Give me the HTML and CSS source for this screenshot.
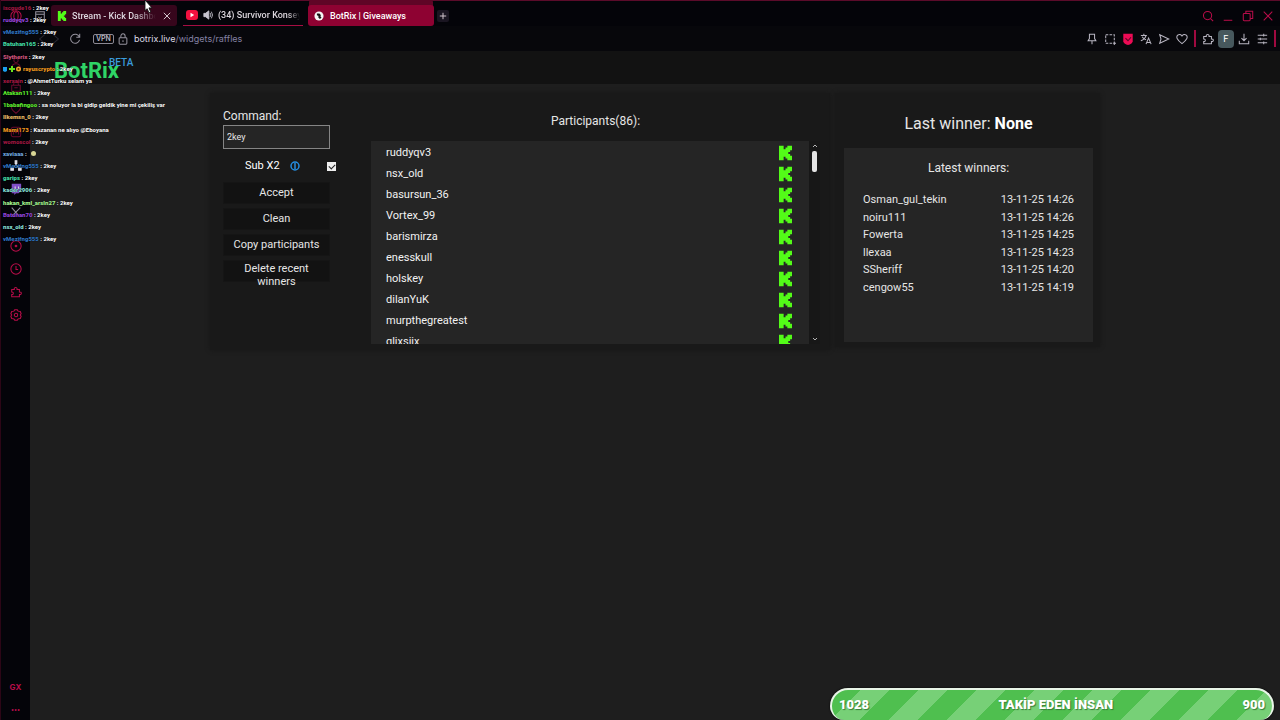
FILE: index.html
```html
<!DOCTYPE html>
<html lang="en">
<head>
<meta charset="utf-8">
<title>BotRix | Giveaways</title>
<link rel="stylesheet" href="styles.css">
</head>
<body>
<svg class="defs" aria-hidden="true">
  <symbol id="kick" viewBox="0 0 14 16"><path fill="#53fc18" d="M0 0h5v4h2V2h2V0h5v5h-2v2h-2v2h2v2h2v5H9v-2H7v-2H5v4H0z"/></symbol>
  <symbol id="puzzle" viewBox="0 0 14 14"><path d="M2 4h3c-.8-3 4-3 3.200 0H11v3c3-.6 3 3.600 0 3v2.500H2V10c2.500.4 2.500-3.400 0-3z"/></symbol>
</svg>
<div class="browser">
  <header class="tabs">
    <div class="tabs-lead">
      <svg class="ico red" viewBox="0 0 14 14"><circle cx="7" cy="7" r="6"/><ellipse cx="7" cy="7" rx="2.500" ry="5"/></svg>
      <svg class="ico grey" viewBox="0 0 14 14"><path d="M2 2h10v10H2zM2 5h10M5 8l2 2 2-2"/></svg>
    </div>
    <div class="tab tab-dim">
      <svg class="fav" viewBox="0 0 14 16"><use href="#kick"/></svg>
      <span class="tab-text fade-dim">Stream - Kick Dashboard</span>
      <button class="bare" aria-label="Close tab"><svg class="tiny" viewBox="0 0 10 10"><path d="M1 1l8 8M9 1L1 9"/></svg></button>
    </div>
    <div class="tab tab-line">
      <svg class="yt" viewBox="0 0 12 10"><rect width="12" height="10" rx="3" fill="#f2103f"/><path d="M4.500 2.800v4.400L8.200 5z" fill="#fff"/></svg>
      <svg class="fav sound" viewBox="0 0 12 12"><path fill="#c8c5d0" d="M1 4h2l4-3v10L3 8H1z"/><path d="M8.500 3.500q2 2.500 0 5M10 2q3 4 0 8"/></svg>
      <span class="tab-text fade-dark">(34) Survivor Konseyi</span>
    </div>
    <div class="tab tab-active">
      <svg class="fav" viewBox="0 0 12 12"><circle cx="6" cy="6" r="5.500" fill="#f5f5f5"/><path fill="#151515" d="M3.500 3h3l2 2-1 1 1.500 2-2 1.500-2-2 .5-1.500-2-1z"/></svg>
      <span class="tab-text">BotRix | Giveaways</span>
    </div>
    <button class="new-tab" aria-label="New tab"><svg class="tiny" viewBox="0 0 10 10"><path d="M5 1v8M1 5h8"/></svg></button>
    <div class="window-tools">
      <button class="bare" aria-label="Search"><svg class="ico red" viewBox="0 0 14 14"><circle cx="6.500" cy="6.500" r="4.800"/><path d="M10 10l3 3"/></svg></button>
      <button class="bare" aria-label="Minimize"><svg class="ico red" viewBox="0 0 14 14"><path d="M2 12h10"/></svg></button>
      <button class="bare" aria-label="Restore"><svg class="ico red" viewBox="0 0 14 14"><rect x="1.500" y="4" width="8" height="8.500" rx="1"/><path d="M4.500 4V1.500h8V10h-3"/></svg></button>
      <button class="bare" aria-label="Close window"><svg class="ico red" viewBox="0 0 14 14"><path d="M2 2l10 10M12 2L2 12"/></svg></button>
    </div>
  </header>

  <nav class="address">
    <button class="bare nav-arrow" aria-label="Back"><svg class="ico dark" viewBox="0 0 14 14"><path d="M9 2L3 7l6 5"/></svg></button>
    <button class="bare nav-arrow" aria-label="Forward"><svg class="ico dark" viewBox="0 0 14 14"><path d="M5 2l6 5-6 5"/></svg></button>
    <button class="bare reload" aria-label="Reload"><svg class="ico grey" viewBox="0 0 14 14"><path d="M12 4.500A5.300 5.300 0 1 0 12.300 8M12.500 1v4H8.500"/></svg></button>
    <span class="vpn">VPN</span>
    <svg class="ico grey lock" viewBox="0 0 14 14"><rect x="2.500" y="5.500" width="9" height="7.500" rx="1"/><path d="M4.500 5.500V4q0-3 2.500-3t2.500 3v1.500M7 8.500v2"/></svg>
    <span class="url">botrix.live<span class="path">/widgets/raffles</span></span>
    <div class="extensions">
      <button class="bare" aria-label="Pin"><svg class="ico" viewBox="0 0 14 14"><path d="M4 1.500h6v5l1.500 2.500h-9L4 6.500zM7 9v4"/></svg></button>
      <button class="bare" aria-label="Snapshot"><svg class="ico" viewBox="0 0 14 14"><rect x="2" y="2" width="10" height="10" stroke-dasharray="3 1.500"/><path d="M11 12h3M12 11v3"/></svg></button>
      <button class="bare" aria-label="Shield"><svg class="ico" viewBox="0 0 14 14"><path fill="#ed0b55" stroke="none" d="M1.500 1h11v9q-1 3-5.500 4-4.500-1-5.500-4z"/><path class="check" d="M4 6l3 3 3.500-4"/></svg></button>
      <button class="bare" aria-label="Translate"><svg class="ico" viewBox="0 0 14 14"><path d="M1 3h7M4.500 1v2M7 3Q6 7 1 9M2.500 4.500Q4 7 7 8M7 13l3-7 3 7M8 11h4"/></svg></button>
      <button class="bare" aria-label="Send"><svg class="ico" viewBox="0 0 14 14"><path d="M2 2l10.500 5L2 12l1.500-5z"/></svg></button>
      <button class="bare" aria-label="Favourite"><svg class="ico" viewBox="0 0 14 14"><path d="M7 12.500Q-1.500 6 2 2.500q3-2 5 1 2-3 5-1Q15.500 6 7 12.500z"/></svg></button>
      <span class="divider"></span>
      <button class="bare" aria-label="Extensions"><svg class="ico" viewBox="0 0 14 14"><use href="#puzzle"/></svg></button>
      <button class="profile">F</button>
      <button class="bare" aria-label="Downloads"><svg class="ico" viewBox="0 0 14 14"><path d="M7 1v8M4 6l3 3 3-3M1.500 9v3.500h11V9"/></svg></button>
      <button class="bare" aria-label="Menu"><svg class="ico" viewBox="0 0 14 14"><path d="M2 2.500h11M2 7h11M2 11.500h11M9 1v3M5 5.500v3M9 10v3"/></svg></button>
      <span class="divider"></span>
    </div>
  </nav>

  <div class="body">
    <aside class="sidebar">
      <svg class="ico dim" viewBox="0 0 14 14"><circle cx="7" cy="4" r="2.500"/><path d="M2 13q0-5 5-5t5 5"/></svg>
      <svg class="ico dim" viewBox="0 0 14 14"><path d="M2 6h10v7H2zM4 6l1-4h4l1 4M5 9h4"/></svg>
      <svg class="ico dim" viewBox="0 0 14 14"><path d="M7 12Q-1 6 3 3q2-1 4 1 2-2 4-1 4 3-4 9z"/></svg>
      <svg class="ico dim" viewBox="0 0 14 14"><rect x="1.500" y="1.500" width="11" height="11" rx="2"/><path d="M4 10V5l3 3 3-3v5"/></svg>
      <svg class="ico light apart" viewBox="0 0 14 14"><path fill="#e2e2ea" d="M6 1h2v3H6zM1 9h3v3H1zM10 9h3v3h-3z"/><path d="M4 9l3-4 3 4"/></svg>
      <svg class="ico" viewBox="0 0 14 14"><path fill="#8150c8" stroke="none" d="M2 1h11v8l-3 3H7l-2 2v-2H2z"/><path class="light" d="M6 4v3M10 4v3"/></svg>
      <svg class="ico light faint" viewBox="0 0 14 14"><path d="M2 2l9 10M12 2L2 12"/></svg>
      <svg class="ico red apart" viewBox="0 0 14 14"><circle cx="7" cy="7" r="6"/><circle cx="7" cy="7" r="1" fill="#b80d49"/></svg>
      <svg class="ico red" viewBox="0 0 14 14"><circle cx="7" cy="7" r="6"/><path d="M7 3.500V7.500h2.500"/></svg>
      <svg class="ico red" viewBox="0 0 14 14"><use href="#puzzle"/></svg>
      <svg class="ico red" viewBox="0 0 14 14"><path d="M5.500 1h3l1 1.500 2.500.5 1 2.500L12 7l1 1.500-1 2.500-2.500.5-1 1.500h-3l-1-1.500L2 11 1 8.500 2 7 1 5.500 2 3l2.500-.5z"/><circle cx="7" cy="7" r="2"/></svg>
      <span class="gx">GX</span>
      <span class="dots">•••</span>
    </aside>

    <div class="page">
      <div class="site-head"><a class="brand" href="#">BotRix<sup>BETA</sup></a></div>
      <main class="raffle">
        <section class="panel entry">
          <form class="controls">
            <label for="command" class="caption">Command:</label>
            <input id="command" class="command" type="text" value="2key">
            <div class="sub">
              <label for="sub">Sub X2</label>
              <svg class="info" viewBox="0 0 10 10"><circle cx="5" cy="5" r="4"/><path d="M5 2v6"/></svg>
              <input id="sub" class="tick" type="checkbox" checked>
            </div>
            <button type="button" class="action">Accept</button>
            <button type="button" class="action">Clean</button>
            <button type="button" class="action">Copy participants</button>
            <button type="button" class="action">Delete recent winners</button>
          </form>
          <div class="participants">
            <h2>Participants(86):</h2>
            <div class="scroller">
              <ul class="people">
                <li>ruddyqv3<svg viewBox="0 0 14 16"><use href="#kick"/></svg></li>
                <li>nsx_old<svg viewBox="0 0 14 16"><use href="#kick"/></svg></li>
                <li>basursun_36<svg viewBox="0 0 14 16"><use href="#kick"/></svg></li>
                <li>Vortex_99<svg viewBox="0 0 14 16"><use href="#kick"/></svg></li>
                <li>barismirza<svg viewBox="0 0 14 16"><use href="#kick"/></svg></li>
                <li>enesskull<svg viewBox="0 0 14 16"><use href="#kick"/></svg></li>
                <li>holskey<svg viewBox="0 0 14 16"><use href="#kick"/></svg></li>
                <li>dilanYuK<svg viewBox="0 0 14 16"><use href="#kick"/></svg></li>
                <li>murpthegreatest<svg viewBox="0 0 14 16"><use href="#kick"/></svg></li>
                <li>glixsiix<svg viewBox="0 0 14 16"><use href="#kick"/></svg></li>
              </ul>
              <div class="bar">
                <svg viewBox="0 0 6 4"><path d="M1 3l2-2 2 2"/></svg>
                <span class="thumb"></span>
                <svg viewBox="0 0 6 4"><path d="M1 1l2 2 2-2"/></svg>
              </div>
            </div>
          </div>
        </section>
        <section class="panel result">
          <h1>Last winner: <b>None</b></h1>
          <div class="latest">
            <h2>Latest winners:</h2>
            <table>
              <tr><td>Osman_gul_tekin</td><td>13-11-25 14:26</td></tr>
              <tr><td>noiru111</td><td>13-11-25 14:26</td></tr>
              <tr><td>Fowerta</td><td>13-11-25 14:25</td></tr>
              <tr><td>llexaa</td><td>13-11-25 14:23</td></tr>
              <tr><td>SSheriff</td><td>13-11-25 14:20</td></tr>
              <tr><td>cengow55</td><td>13-11-25 14:19</td></tr>
            </table>
          </div>
        </section>
      </main>
    </div>
  </div>
</div>

<ul class="chat">
  <li><b class="c-wine">iscgude16</b> : 2key</li>
  <li><b class="c-violet">ruddyqv3</b> : 2key</li>
  <li><b class="c-blue">vMezifng555</b> : 2key</li>
  <li><b class="c-mint">Batuhan165</b> : 2key</li>
  <li><b class="c-rose">Slytherix</b> : 2key</li>
  <li><svg class="badges" viewBox="0 0 18 6"><path fill="#1b9ff0" d="M0 1h4v4l-2 1-2-1z"/><path fill="#6be31c" d="M8 0h2v2h2v2h-2v2H8V4H6V2h2z"/><circle cx="15.500" cy="3" r="2.500" fill="#f5a52a"/><circle cx="15.500" cy="3" r="1" fill="#5b3300"/></svg><b class="c-orange">rayuscrypto</b> : 2key</li>
  <li><b class="c-wine">xerxain</b> : @AhmetTurku selam ya</li>
  <li><b class="c-green">Atakan111</b> : 2key</li>
  <li><b class="c-green">1babafingoo</b> : sa noluyor la bi gidip geldik yine mi çekiliş var</li>
  <li><b class="c-sand">Ilkemsn_0</b> : 2key</li>
  <li><b class="c-orange">Mami173</b> : Kazanan ne alıyo @Eboyana</li>
  <li><b class="c-wine">womoscol</b> : 2key</li>
  <li><b class="c-sky">xaviaaa</b> : <i class="emote"></i></li>
  <li><b class="c-blue">vMezifng555</b> : 2key</li>
  <li><b class="c-mint">garips</b> : 2key</li>
  <li><b class="c-ice">kader2906</b> : 2key</li>
  <li><b class="c-lime">hakan_kml_arsln27</b> : 2key</li>
  <li><b class="c-violet">Batuhan70</b> : 2key</li>
  <li><b class="c-ice">nsx_old</b> : 2key</li>
  <li><b class="c-blue">vMezifng555</b> : 2key</li>
</ul>

<div class="goal"><span>1028</span><span>TAKİP EDEN İNSAN</span><span>900</span></div>

<svg class="cursor" viewBox="0 0 10 16"><path d="M1 0v12l2.500-2 2 4.500 2-1-2-4.500H9z" fill="#fff" stroke="#111"/></svg>
</body>
</html>
```
FILE: styles.css
```css
* { box-sizing: border-box; }
body { margin: 0; background: #1e1e1e; color: #e6e6e6; font: 11px/16px Roboto, "Noto Sans", sans-serif; overflow: hidden; }
h1, h2, ul { margin: 0; padding: 0; font-weight: 400; list-style: none; }
button, input { font: inherit; color: inherit; }
.defs { position: absolute; width: 0; height: 0; }

.browser { min-height: 100vh; display: flex; flex-direction: column; border-left: 1px solid #2c0616; }
.bare { display: flex; padding: 0; border: 0; background: none; }
.ico { display: block; width: 12px; height: 12px; flex: none; fill: none; stroke: #b9b6c2; stroke-width: 1.2; }
.ico.red { stroke: #b80d49; }
.ico.grey { stroke: #96939f; }
.ico.dark { stroke: #292730; }
.ico.dim { stroke: #690b2e; }
.ico.light, .light { stroke: #e2e2ea; }
.ico.faint { stroke: #96939f; }
.check { stroke: #5a0622; }
.tiny { width: 8px; height: 8px; fill: none; stroke: #d9cdd4; stroke-width: 1.2; }

.tabs { display: flex; align-items: center; height: 26px; padding-top: 4px; background: #040409; border-top: 1px solid #5b0b2a; font: 500 9px/14px Roboto, sans-serif; color: #dcd6dd; }
.tabs-lead { display: flex; gap: 12px; width: 50px; padding-left: 9px; }
.tab { display: flex; align-items: center; gap: 5px; height: 21px; padding: 0 6px; border-radius: 3px; }
.tab-dim { width: 126px; background: #37061c; }
.tab-line { width: 120px; margin: 0 5px 0 6px; padding: 0 3px; border-bottom: 1px solid #a70d43; border-radius: 0; }
.tab-active { width: 126px; gap: 6px; background: #8e0232; box-shadow: 0 -6px 0 -1px #5f0526; color: #fff; }
.tab-text { overflow: hidden; flex: 1; white-space: nowrap; }
.fade-dim { -webkit-mask-image: linear-gradient(90deg, #000 75%, transparent); mask-image: linear-gradient(90deg, #000 75%, transparent); margin-right: 2px; }
.fade-dark { -webkit-mask-image: linear-gradient(90deg, #000 85%, transparent); mask-image: linear-gradient(90deg, #000 85%, transparent); }
.fav { width: 10px; height: 10px; flex: none; }
.yt { width: 12px; height: 10px; flex: none; }
.sound { fill: none; stroke: #c8c5d0; }
.new-tab { display: flex; align-items: center; justify-content: center; width: 12px; height: 12px; margin-left: 3px; padding: 0; border: 0; border-radius: 2px; background: #1a1521; }
.window-tools { display: flex; gap: 8px; margin-left: auto; padding-right: 6px; }

.address { display: flex; align-items: center; height: 25px; background: #07070b; font: 9px/14px Inter, sans-serif; }
.nav-arrow:first-child { margin-left: 36px; }
.reload { margin-left: 8px; }
.vpn { margin: 0 3px 0 12px; padding: 0 2px; border: 1px solid #8b8893; border-radius: 2px; font-size: 7px; line-height: 8px; font-weight: 600; color: #b9b6c2; }
.lock { margin-right: 5px; }
.url { color: #dedce6; }
.path { color: #8581a3; }
.extensions { display: flex; align-items: center; gap: 6px; margin-left: auto; padding-right: 4px; }
.divider { width: 2px; height: 17px; background: #a00a40; }
.profile { width: 16px; height: 18px; margin: 0 -2px; padding: 0; border: 0; border-radius: 4px; background: #47585d; color: #fff; }

.body { flex: 1; display: flex; }
.sidebar { display: flex; flex-direction: column; align-items: center; gap: 11px; width: 29px; padding: 6px 0 4px; background: #040409; color: #b80d49; }
.apart { margin-top: 11px; }
.gx { margin-top: auto; font: 700 8px/12px Inter, sans-serif; }
.dots { font-size: 9px; line-height: 12px; }
.page { flex: 1; min-width: 0; }
.site-head { height: 33px; padding-left: 24px; background: #121212; }
.brand { color: #2fd566; font-size: 22px; line-height: 40px; font-weight: 700; text-decoration: none; }
.brand sup { margin-left: -10px; color: #3a9cdc; font-size: 10px; line-height: 0; vertical-align: 12px; font-weight: 500; }

.raffle { display: grid; grid-template-columns: minmax(0, 620fr) minmax(0, 265fr); align-items: start; gap: 5px; max-width: 890px; margin: 9px auto 0; }
.panel { background: #191919; box-shadow: 0 0 4px #171717; }
.entry { display: flex; gap: 41px; padding: 14px 10px 6px 13px; min-height: 257px; }
.controls { display: flex; flex-direction: column; width: 107px; }
.caption { line-height: 18px; font-size: 12px; }
.command { width: 100%; height: 24px; margin-bottom: 9px; padding: 0 3px; border: 1px solid #858585; background: #252525; font-size: 9px; }
.sub { display: flex; align-items: center; height: 16px; margin: 0 -6px 8px 22px; color: #fff; }
.info { width: 10px; height: 10px; margin-left: 10px; fill: none; stroke: #258de0; stroke-width: 1.5; }
.tick { appearance: none; width: 9px; height: 9px; margin: 0 0 0 auto; background: #eee; }
.tick:checked::after { content: ""; display: block; width: 5px; height: 3px; margin: 2px; border: solid #222; border-width: 0 0 1px 1px; transform: rotate(-45deg); }
.action { height: 22px; margin-bottom: 4px; padding: 0; border: 1px solid #151515; background: #121212; line-height: 20px; }
.action:last-child { padding: 1px 12px 0; line-height: 13px; }
.participants { flex: 1; }
.participants h2 { padding: 6px 0 12px; text-align: center; font-size: 12px; }
.scroller { display: flex; height: 203px; background: #252525; overflow: hidden; }
.people { flex: 1; padding: 1px 17px 0 15px; color: #f2f2f2; }
.people li { display: flex; align-items: center; justify-content: space-between; height: 21px; }
.people svg { width: 13px; height: 16px; }
.bar { display: flex; flex-direction: column; align-items: center; width: 11px; padding: 3px 0; background: #171717; }
.bar svg { width: 6px; height: 4px; fill: none; stroke: #b5b5b5; }
.bar svg:last-child { margin-top: auto; }
.thumb { width: 5px; height: 21px; margin-top: 3px; border-radius: 2px; background: #e4e4e4; }
.result { padding: 20px 7px 5px 9px; }
.result h1 { padding-bottom: 13px; text-align: center; font-size: 16px; line-height: 22px; }
.result b { color: #fff; font-weight: 700; }
.latest { min-height: 194px; padding: 12px 19px; background: #252525; }
.latest h2 { padding-bottom: 14px; text-align: center; font-size: 12px; line-height: 17px; }
.latest table { width: 100%; height: 105px; border-collapse: collapse; }
.latest td { padding: 0; line-height: 17px; }
.latest td:last-child { text-align: right; }

.chat { position: absolute; top: 2px; left: 3px; display: flex; flex-direction: column; justify-content: space-between; height: 243px; color: #fff; font-size: 6px; line-height: 12px; font-weight: 700; white-space: nowrap; text-shadow: 0 0 1px #000; }
.badges { width: 18px; height: 6px; margin-right: 2px; vertical-align: -1px; }
.emote { display: inline-block; width: 5px; height: 5px; margin-left: 3px; border-radius: 50%; background: #d9d695; }
.c-wine { color: #9c1740; }
.c-violet { color: #8d43d5; }
.c-blue { color: #2d70bd; }
.c-mint { color: #42d6a0; }
.c-rose { color: #c9527a; }
.c-orange { color: #e8941f; }
.c-green { color: #5ce62e; }
.c-sand { color: #e3b565; }
.c-sky { color: #6ba0d6; }
.c-ice { color: #83dcd0; }
.c-lime { color: #a0ee8c; }

.goal { position: absolute; right: 6px; bottom: 0; display: flex; align-items: center; justify-content: space-between; width: 444px; height: 32px; padding: 0 7px; border: 2px solid #e9f5e8; border-bottom: 0; border-radius: 18px 18px 14px 14px; background: repeating-linear-gradient(135deg, #4fbf4f 0 20px, #77d077 20px 41px); box-shadow: 0 0 2px #000; color: #fff; font-size: 13px; font-weight: 900; text-shadow: 1px 1px 1px #397c39; }
.cursor { position: absolute; top: 0; left: 144px; width: 9px; height: 14px; }
```
